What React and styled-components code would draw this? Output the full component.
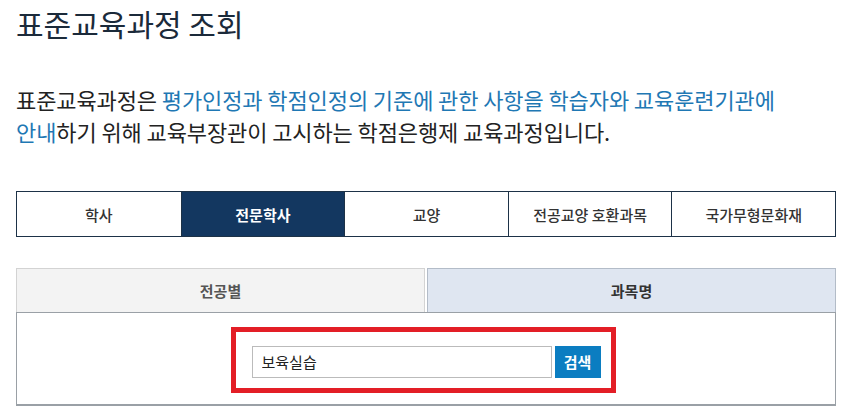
import React from "react";
import styled, { createGlobalStyle } from "styled-components";

const Global = createGlobalStyle`
  html, body { margin: 0; padding: 0; background: #fff; }
  body { font-family: "Noto Sans CJK KR", "Noto Sans", sans-serif; color: #222; }
  * { box-sizing: border-box; }
`;

const Page = styled.div`
  width: 846px;
  padding: 0 10px 0 16px;
`;

const Title = styled.h2`
  margin: 0;
  padding-top: 3px;
  font-size: 30px;
  line-height: 40px;
  font-weight: 400;
  color: #1b2a3a;
`;

const Desc = styled.p`
  margin: 40px 0 0;
  font-size: 22px;
  line-height: 32px;
  color: #222;
  letter-spacing: -0.1px;
`;

const Hl = styled.span`
  color: #1f78b4;
`;

const TabBar = styled.div`
  margin-top: 44px;
  display: grid;
  grid-template-columns: repeat(5, 1fr);
  border: 1px solid #1d3247;
  height: 46px;
`;

const Tab = styled.div`
  display: flex;
  align-items: center;
  justify-content: center;
  font-size: 15px;
  font-weight: ${p => (p.$active ? 700 : 500)};
  color: ${p => (p.$active ? "#fff" : "#333")};
  background: ${p => (p.$active ? "#133760" : "#fff")};
  & + & { border-left: 1px solid #1d3247; }
`;

const SubTabs = styled.div`
  margin-top: 31px;
  display: grid;
  grid-template-columns: 1fr 1fr;
  column-gap: 2px;
  height: 44px;
`;

const SubTab = styled.div`
  display: flex;
  align-items: center;
  justify-content: center;
  font-size: 15px;
  font-weight: 700;
  color: ${p => (p.$active ? "#333" : "#555")};
  background: ${p => (p.$active ? "#dfe6f1" : "#f3f3f3")};
  border: 1px solid ${p => (p.$active ? "#b3bcc8" : "#d3d3d3")};
  border-bottom: none;
`;

const Content = styled.div`
  height: 94px;
  border: 1px solid #9aa0a6;
  border-bottom-width: 2px;
  display: flex;
  align-items: center;
  justify-content: center;
`;

const Highlight = styled.div`
  display: flex;
  align-items: center;
  gap: 3px;
  border: 5px solid #e31e26;
  padding: 14px 10px 10px 16px;
  margin-left: -6px;
  margin-top: 2px;
`;

const Input = styled.input`
  width: 300px;
  height: 32px;
  border: 1px solid #bbb;
  padding: 0 9px;
  font-family: "Noto Sans CJK KR", sans-serif;
  font-size: 15px;
  color: #222;
  outline: none;
`;

const Button = styled.button`
  width: 46px;
  height: 32px;
  border: none;
  background: #0b7dc1;
  color: #fff;
  font-family: "Noto Sans CJK KR", sans-serif;
  font-size: 15px;
  font-weight: 700;
  padding: 0;
`;

const tabs = ["학사", "전문학사", "교양", "전공교양 호환과목", "국가무형문화재"];

export default function App() {
  return (
    <Page>
      <Global />
      <Title>표준교육과정 조회</Title>
      <Desc>
        표준교육과정은 <Hl>평가인정과 학점인정의 기준에 관한 사항을 학습자와 교육훈련기관에</Hl>
        <br />
        <Hl>안내</Hl>하기 위해 교육부장관이 고시하는 학점은행제 교육과정입니다.
      </Desc>
      <TabBar>
        {tabs.map((t, i) => (
          <Tab key={t} $active={i === 1}>{t}</Tab>
        ))}
      </TabBar>
      <SubTabs>
        <SubTab>전공별</SubTab>
        <SubTab $active>과목명</SubTab>
      </SubTabs>
      <Content>
        <Highlight>
          <Input defaultValue="보육실습" />
          <Button>검색</Button>
        </Highlight>
      </Content>
    </Page>
  );
}
